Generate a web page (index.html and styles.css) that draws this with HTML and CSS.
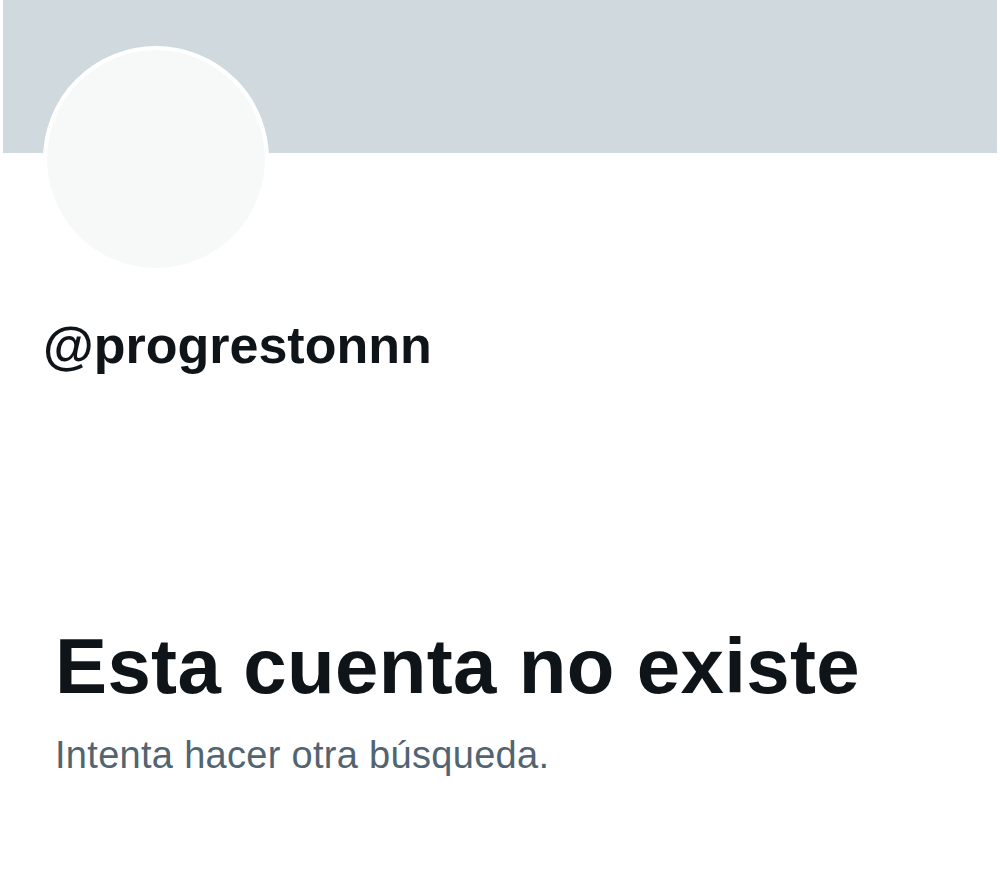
FILE: index.html
```html
<html>
<head>
	<title>@progrestonnn</title>
	<link rel="stylesheet" href="styles.css">
	<meta name="viewport" content="width=device-width, initial-scale=1.0">
</head>
<body>
	<div class="banner"></div>
	<div class="avatar"></div>
	<p class="handle">@progrestonnn</p>
	<div class="empty">
		<h1>Esta cuenta no existe</h1>
		<p>Intenta hacer otra búsqueda.</p>
	</div>
</body>
</html>
```
FILE: styles.css
```css
	body {
		margin: 0;
		background-color: white;
		color: #0f1419;
		font-family: "Liberation Sans", Arial, sans-serif;
	}

	.banner {
		margin: 0 3px;
		height: 153px;
		background-color: #cfd9de;
	}

	.avatar {
		width: 218px;
		height: 218px;
		margin: -107px 0 0 43px;
		border: 4px solid white;
		border-radius: 50%;
		background-color: #f7f9f9;
	}

	.handle {
		margin: 43px 0 0 43px;
		font-size: 52px;
		line-height: 60px;
		font-weight: bold;
	}

	.empty {
		margin: 246px 0 0 55px;
	}

	.empty h1 {
		margin: 0;
		font-size: 78px;
		line-height: 90px;
		font-weight: bold;
		letter-spacing: 0.35px;
	}

	.empty p {
		margin: 21px 0 0 0;
		font-size: 38px;
		line-height: 46px;
		letter-spacing: 0.3px;
		color: #536471;
	}
```
